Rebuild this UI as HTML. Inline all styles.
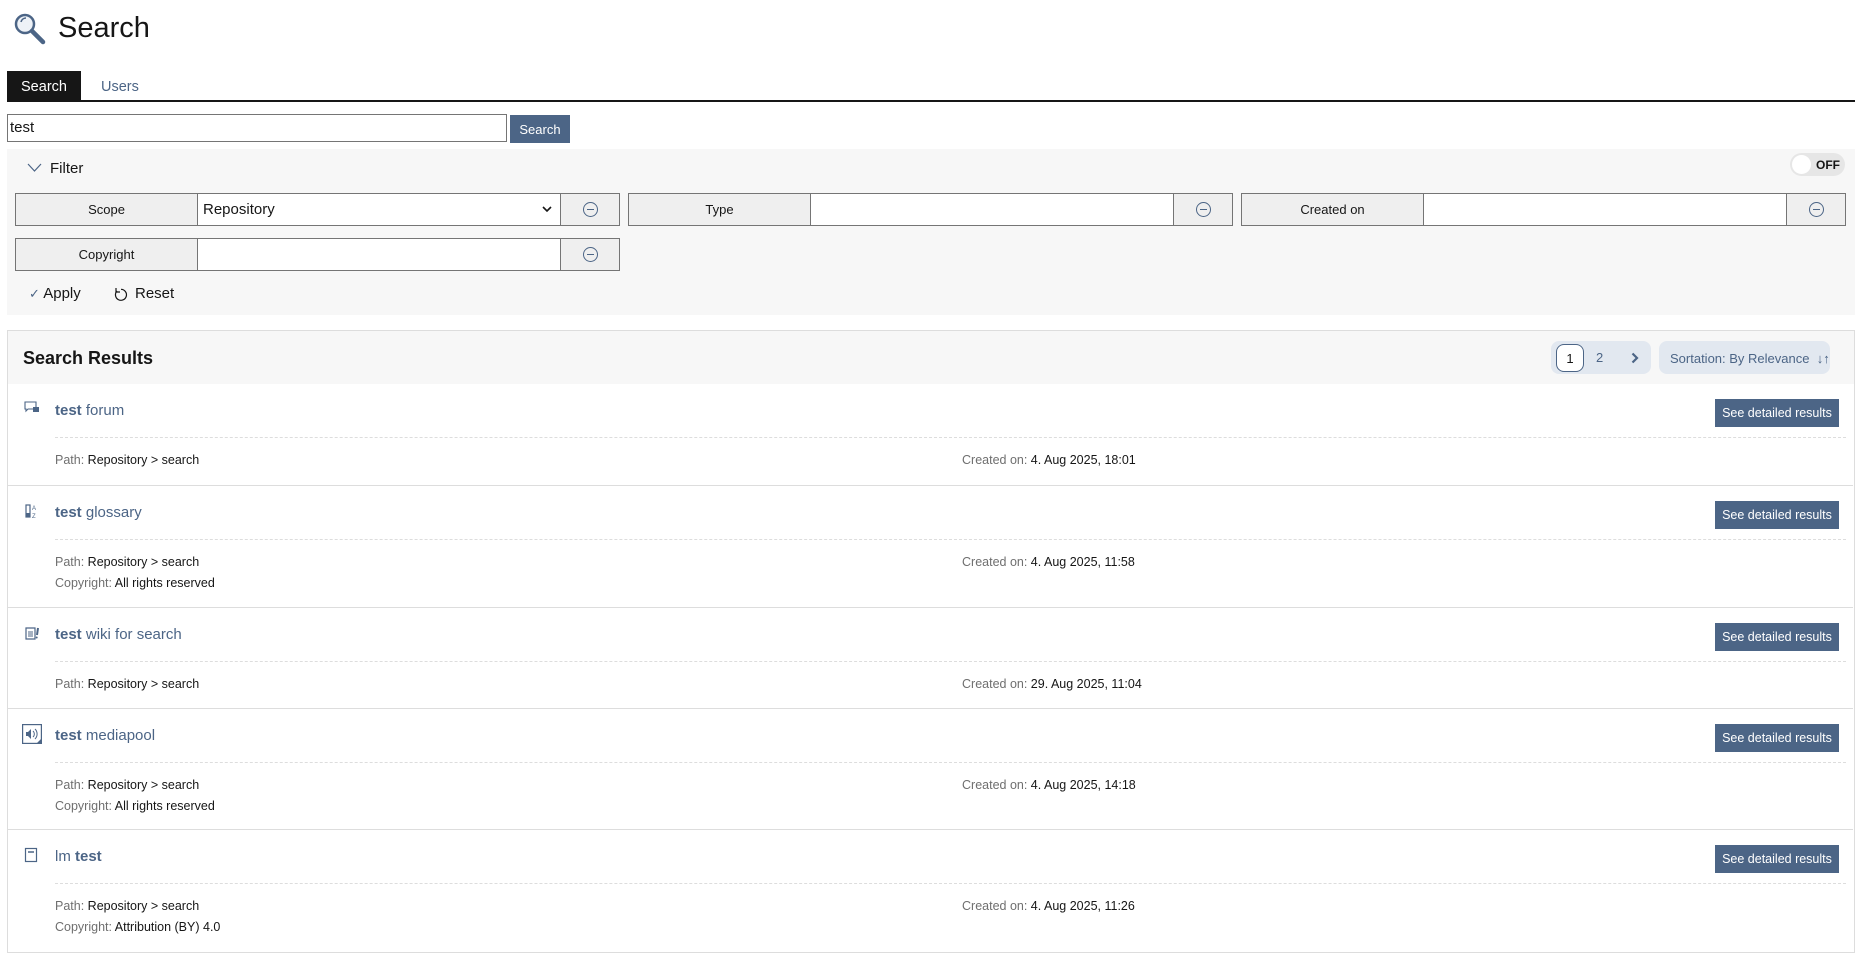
<!DOCTYPE html>
<html><head><meta charset="utf-8"><style>
*{box-sizing:border-box;margin:0;padding:0}
body{width:1863px;height:971px;background:#fff;font-family:"Liberation Sans",sans-serif;color:#161616;position:relative;overflow:hidden}
.a{position:absolute}
.grp{position:absolute;height:33px;display:flex;border:1px solid #757575}
.grp .l{background:#efefef;border-right:1px solid #757575;display:flex;align-items:center;justify-content:center;font-size:13px;color:#161616}
.grp .i{background:#fff;border-right:1px solid #757575;font-size:15px;display:flex;align-items:center;padding-left:5px;position:relative}
.grp .b{background:#efefef;display:flex;align-items:center;justify-content:center}
.mc{width:15px;height:15px;border:1.2px solid #4c6586;border-radius:50%;position:relative}
.mc:after{content:"";position:absolute;left:3px;right:3px;top:6px;height:1.2px;background:#4c6586}
.item{position:absolute;left:8px;width:1845px;border-bottom:1px solid #ddd}
.item .t{position:absolute;left:47px;top:18px;font-size:15px;color:#4c6586}
.item .t b{font-weight:bold}
.item .d{position:absolute;left:47px;right:7px;top:53px;border-top:1px dashed #ddd}
.item .p{position:absolute;left:47px;font-size:12.5px;color:#161616}
.item .p span{color:#6f6f6f}
.item .c{position:absolute;left:954px;font-size:12.5px;color:#161616}
.item .c span{color:#6f6f6f}
.item .btn{position:absolute;right:14px;top:15px;width:124px;height:28px;background:#4c6586;color:#fff;font-size:12.5px;display:flex;align-items:center;justify-content:center}
.item .ic{position:absolute;left:16px;top:17px}
</style></head><body>
<svg class="a" style="left:13px;top:12px" width="34" height="34" viewBox="0 0 34 34"><circle cx="12" cy="12" r="9" fill="#eef2f7" stroke="#4c6586" stroke-width="2.5"/><path d="M8 10a5 5 0 0 1 5-4" stroke="#4c6586" stroke-width="1.5" fill="none"/><path d="M19 19l11 11" stroke="#4c6586" stroke-width="4.5" stroke-linecap="round"/></svg>
<div class="a" style="left:58px;top:12px;font-size:29px;color:#161616">Search</div>
<div class="a" style="left:7px;top:71px;width:74px;height:30px;background:#161616;color:#fff;font-size:14.5px;display:flex;align-items:center;justify-content:center;padding-top:2px">Search</div>
<div class="a" style="left:101px;top:72px;height:30px;color:#4c6586;font-size:14.5px;display:flex;align-items:center">Users</div>
<div class="a" style="left:7px;top:100px;width:1848px;height:2px;background:#161616"></div>
<div class="a" style="left:7px;top:114px;width:500px;height:28px;border:1px solid #757575;font-size:15px;padding:4px 2px">test</div>
<div class="a" style="left:510px;top:115px;width:60px;height:28px;background:#4c6586;color:#fff;font-size:13px;display:flex;align-items:center;justify-content:center">Search</div>
<div class="a" style="left:7px;top:149px;width:1848px;height:166px;background:#f7f7f7"></div>
<svg class="a" style="left:27px;top:163px" width="15" height="10"><path d="M1 1l6.5 7L14 1" stroke="#4c6586" fill="none" stroke-width="1.2"/></svg>
<div class="a" style="left:50px;top:160px;font-size:15px">Filter</div>
<div class="a" style="left:1790px;top:153px;width:55px;height:23px;background:#e6e6e6;border-radius:12px"><div style="position:absolute;left:2px;top:2px;width:19px;height:19px;border-radius:50%;background:#fff"></div><div style="position:absolute;left:26px;top:5px;font-size:12px;font-weight:bold">OFF</div></div>
<div class="grp" style="left:15px;top:193px;width:605px"><div class="l" style="width:182px">Scope</div><div class="i" style="width:363px">Repository<svg style="position:absolute;right:8px;top:12px" width="10" height="7"><path d="M1 1l4 4 4-4" stroke="#161616" stroke-width="1.6" fill="none"/></svg></div><div class="b" style="flex:1"><div class="mc"></div></div></div>
<div class="grp" style="left:628px;top:193px;width:605px"><div class="l" style="width:182px">Type</div><div class="i" style="width:363px"></div><div class="b" style="flex:1"><div class="mc"></div></div></div>
<div class="grp" style="left:1241px;top:193px;width:605px"><div class="l" style="width:182px">Created on</div><div class="i" style="width:363px"></div><div class="b" style="flex:1"><div class="mc"></div></div></div>
<div class="grp" style="left:15px;top:238px;width:605px"><div class="l" style="width:182px">Copyright</div><div class="i" style="width:363px"></div><div class="b" style="flex:1"><div class="mc"></div></div></div>
<div class="a" style="left:29px;top:285px;font-size:15px"><span style="color:#4c6586;font-size:13px">✓</span> Apply</div>
<svg class="a" style="left:114px;top:287px" width="15" height="15" viewBox="0 0 15 15"><path d="M3 4a5.5 5.5 0 1 0 4-1.7" stroke="#161616" fill="none" stroke-width="1.2"/><path d="M2 1v4h4" stroke="#161616" fill="none" stroke-width="1.2"/></svg>
<div class="a" style="left:135px;top:285px;font-size:15px">Reset</div>
<div class="a" style="left:7px;top:330px;width:1848px;height:623px;border:1px solid #ddd"></div>
<div class="a" style="left:8px;top:331px;width:1846px;height:53px;background:#f7f7f7"></div>
<div class="a" style="left:23px;top:348px;font-size:18px;font-weight:bold;color:#161616">Search Results</div>
<div class="a" style="left:1551px;top:341px;width:100px;height:33px;background:#e2e8f0;border-radius:8px"></div>
<div class="a" style="left:1556px;top:344px;width:28px;height:28px;background:#fff;border:1px solid #4c6586;border-radius:8px;font-size:13px;display:flex;align-items:center;justify-content:center">1</div>
<div class="a" style="left:1596px;top:350px;font-size:13px;color:#4c6586">2</div>
<svg class="a" style="left:1631px;top:352px" width="8" height="12"><path d="M1.5 1.5L6 6l-4.5 4.5" stroke="#4c6586" stroke-width="2.2" fill="none"/></svg>
<div class="a" style="left:1659px;top:341px;width:171px;height:33px;background:#e2e8f0;border-radius:8px;font-size:13px;color:#4c6586;padding:10px 0 0 11px">Sortation: By Relevance&nbsp; ↓↑</div>

<div class="item" style="top:384px;height:102px">
<svg class="ic" width="16" height="14" viewBox="0 0 16 14"><path d="M1 1h11v7H4l-2 2V8H1z" fill="none" stroke="#4c6586" stroke-width="1.1"/><rect x="9" y="6" width="6" height="5" fill="#4c6586"/></svg>
<div class="t"><b>test</b> forum</div><div class="d"></div><div class="btn">See detailed results</div>
<div class="p" style="top:69px"><span>Path:</span> Repository &gt; search</div><div class="c" style="top:69px"><span>Created on:</span> 4. Aug 2025, 18:01</div></div>

<div class="item" style="top:486px;height:122px">
<svg class="ic" width="16" height="16" viewBox="0 0 16 16"><rect x="2" y="2" width="4" height="12" fill="none" stroke="#4c6586" stroke-width="1.2"/><rect x="2" y="10" width="4" height="4" fill="#4c6586"/><text x="8" y="7" font-size="6" fill="#4c6586" font-family="Liberation Sans">A</text><text x="8" y="15" font-size="6" fill="#4c6586" font-family="Liberation Sans">Z</text></svg>
<div class="t"><b>test</b> glossary</div><div class="d"></div><div class="btn">See detailed results</div>
<div class="p" style="top:69px"><span>Path:</span> Repository &gt; search</div><div class="c" style="top:69px"><span>Created on:</span> 4. Aug 2025, 11:58</div>
<div class="p" style="top:90px"><span>Copyright:</span> All rights reserved</div></div>

<div class="item" style="top:608px;height:101px">
<svg class="ic" width="17" height="16" viewBox="0 0 17 16"><path d="M2 3h9v11H2z" fill="none" stroke="#4c6586" stroke-width="1.2"/><path d="M4 7h5M4 9h5M4 11h5" stroke="#4c6586"/><path d="M14 3l-1 7" stroke="#4c6586" stroke-width="2"/><circle cx="12.7" cy="12.5" r="1" fill="#4c6586"/></svg>
<div class="t"><b>test</b> wiki for search</div><div class="d"></div><div class="btn">See detailed results</div>
<div class="p" style="top:69px"><span>Path:</span> Repository &gt; search</div><div class="c" style="top:69px"><span>Created on:</span> 29. Aug 2025, 11:04</div></div>

<div class="item" style="top:709px;height:121px">
<svg class="ic" width="20" height="20" viewBox="0 0 20 20" style="left:14px;top:15px"><rect x="0.6" y="0.6" width="18.8" height="18.8" fill="none" stroke="#4c6586" stroke-width="1.2"/><path d="M4 8h2l3-3v10l-3-3H4z" fill="#4c6586"/><path d="M11 7a4 4 0 0 1 0 6M13 5a7 7 0 0 1 0 10" stroke="#4c6586" fill="none"/><path d="M19 15v4h-4z" fill="#4c6586"/></svg>
<div class="t"><b>test</b> mediapool</div><div class="d"></div><div class="btn">See detailed results</div>
<div class="p" style="top:69px"><span>Path:</span> Repository &gt; search</div><div class="c" style="top:69px"><span>Created on:</span> 4. Aug 2025, 14:18</div>
<div class="p" style="top:90px"><span>Copyright:</span> All rights reserved</div></div>

<div class="item" style="top:830px;height:122px;border-bottom:none">
<svg class="ic" width="14" height="16" viewBox="0 0 14 16"><rect x="1.5" y="1.5" width="11" height="13" fill="none" stroke="#4c6586" stroke-width="1.2"/><path d="M4 5h6" stroke="#4c6586" stroke-width="1.5"/></svg>
<div class="t">lm <b>test</b></div><div class="d"></div><div class="btn">See detailed results</div>
<div class="p" style="top:69px"><span>Path:</span> Repository &gt; search</div><div class="c" style="top:69px"><span>Created on:</span> 4. Aug 2025, 11:26</div>
<div class="p" style="top:90px"><span>Copyright:</span> Attribution (BY) 4.0</div></div>
</body></html>
